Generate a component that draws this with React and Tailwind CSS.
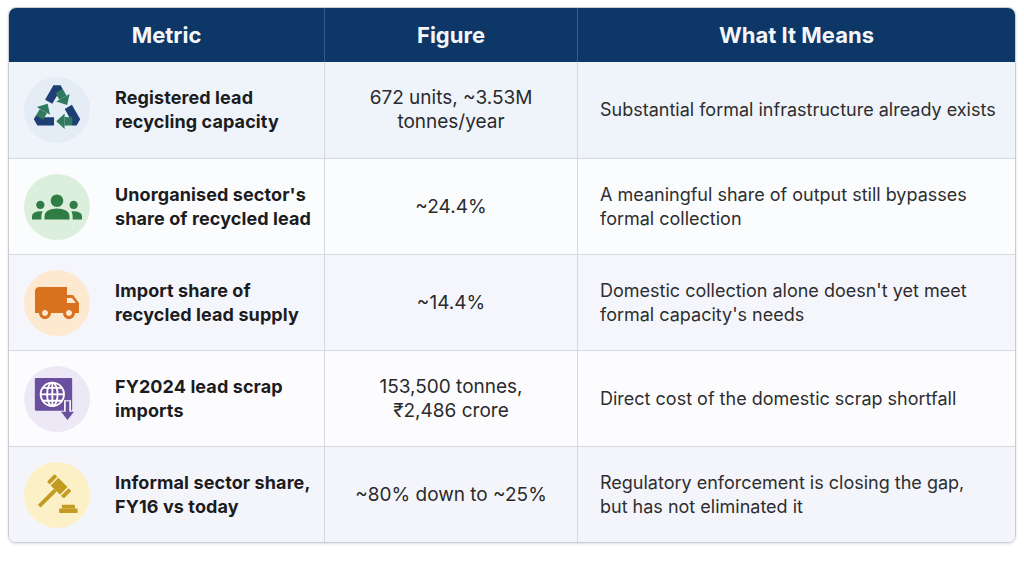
import React from 'react';
import { MdGroups, MdLocalShipping } from 'react-icons/md';

// Two-tone recycle symbol: three bent arrows, each rotated 120deg round the centroid
const RecycleIcon = () => {
  const arm = (
    <g>
      <polyline points="17,21.1 24,9 26,12.46" fill="none" stroke="#1d3f73" strokeWidth="7" strokeLinejoin="bevel" />
      <line x1="25.8" y1="12.1" x2="29" y2="17.7" stroke="#2f7a5e" strokeWidth="7" />
      <polygon points="34.6,14.5 23.4,20.9 32.5,23.8" fill="#2f7a5e" />
    </g>
  );
  return (
    <svg viewBox="3 3 42 42" className="w-[50px] h-[50px]">
      <g transform="translate(0,-4)">
        {arm}
        <g transform="rotate(120 24 28)">{arm}</g>
        <g transform="rotate(240 24 28)">{arm}</g>
      </g>
    </svg>
  );
};

// Globe inside a square with a down arrow at the corner
const GlobeImportIcon = () => (
  <svg viewBox="0 0 48 48" className="w-[56px] h-[56px]">
    <rect x="5" y="6" width="32" height="28" rx="1" fill="#6a4f9e" />
    <g fill="none" stroke="#fff" strokeWidth="1.6">
      <circle cx="20" cy="20" r="10" />
      <ellipse cx="20" cy="20" rx="4.5" ry="10" />
      <line x1="20" y1="10" x2="20" y2="30" />
      <line x1="10" y1="20" x2="30" y2="20" />
      <path d="M11.5 14.5 H28.5 M11.5 25.5 H28.5" />
    </g>
    <path d="M33 25 V37" stroke="#f3f0f8" strokeWidth="6" />
    <path d="M33 26 V37" stroke="#6a4f9e" strokeWidth="3" />
    <polygon points="27.5,35 38.5,35 33,42" fill="#6a4f9e" />
  </svg>
);

// Gavel: head top, handle to the lower left, sound block lower right
const GavelIcon = () => (
  <svg viewBox="0 0 48 48" className="w-[52px] h-[52px]" fill="#c39a22">
    <g transform="rotate(45 26 16)">
      <rect x="15" y="11" width="22" height="10" rx="1" />
      <rect x="18.5" y="10" width="1.4" height="12" fill="#fcf0c6" />
      <rect x="32" y="10" width="1.4" height="12" fill="#fcf0c6" />
      <rect x="24.2" y="21" width="3.6" height="21" rx="1" />
    </g>
    <rect x="28.5" y="33" width="12" height="3.5" rx="0.5" />
    <rect x="26" y="36.5" width="17" height="4" rx="0.5" />
  </svg>
);

const rows = [
  {
    icon: <RecycleIcon />,
    circle: 'bg-[#e4ecf5]',
    bg: 'bg-[#eef4fa]',
    metric: ['Registered lead', 'recycling capacity'],
    figure: ['672 units, ~3.53M', 'tonnes/year'],
    means: ['Substantial formal infrastructure already exists'],
  },
  {
    icon: <MdGroups className="w-[50px] h-[50px] text-[#2f7d45]" />,
    circle: 'bg-[#dcefdc]',
    bg: 'bg-[#fbfcfe]',
    metric: ["Unorganised sector's", 'share of recycled lead'],
    figure: ['~24.4%'],
    means: ['A meaningful share of output still bypasses', 'formal collection'],
  },
  {
    icon: <MdLocalShipping className="w-[48px] h-[48px] text-[#d8721e]" />,
    circle: 'bg-[#fde8d0]',
    bg: 'bg-[#f5f6fb]',
    metric: ['Import share of', 'recycled lead supply'],
    figure: ['~14.4%'],
    means: ["Domestic collection alone doesn't yet meet", "formal capacity's needs"],
  },
  {
    icon: <GlobeImportIcon />,
    circle: 'bg-[#ede8f5]',
    bg: 'bg-[#fcfcfe]',
    metric: ['FY2024 lead scrap', 'imports'],
    figure: ['153,500 tonnes,', '₹2,486 crore'],
    means: ['Direct cost of the domestic scrap shortfall'],
  },
  {
    icon: <GavelIcon />,
    circle: 'bg-[#fcf0c6]',
    bg: 'bg-[#f4f5fb]',
    metric: ['Informal sector share,', 'FY16 vs today'],
    figure: ['~80% down to ~25%'],
    means: ['Regulatory enforcement is closing the gap,', 'but has not eliminated it'],
  },
];

const Lines = ({ lines }) => lines.map((l, i) => <div key={i}>{l}</div>);

export default function App() {
  return (
    <div className="w-[1024px] h-[564px] bg-white pt-[7px] pl-[8px] font-['Inter','Liberation_Sans',sans-serif]">
      <div className="w-[1008px] rounded-lg border border-[#c9cdd3] overflow-hidden shadow-sm">
        {/* Header */}
        <div className="grid grid-cols-[315px_253px_1fr] h-[54px] bg-[#0c3766] text-[#f4f6fa] text-[22px] font-bold">
          <div className="flex items-center justify-center">Metric</div>
          <div className="flex items-center justify-center border-l border-[#3a5a85]">Figure</div>
          <div className="flex items-center justify-center border-l border-[#3a5a85]">What It Means</div>
        </div>

        {rows.map((row, i) => (
          <div
            key={i}
            className={`grid grid-cols-[315px_253px_1fr] h-[96px] leading-[24px] ${row.bg} ${i > 0 ? 'border-t border-[#d5d8dd]' : ''}`}
          >
            <div className="flex items-center pl-[15px]">
              <div className={`w-[66px] h-[66px] rounded-full flex items-center justify-center shrink-0 ${row.circle}`}>
                {row.icon}
              </div>
              <div className="ml-[25px] text-[18px] font-bold text-[#1c1c1e] tracking-[0.1px]">
                <Lines lines={row.metric} />
              </div>
            </div>
            <div className="flex flex-col items-center justify-center text-center text-[19px] text-[#2a2a2c] border-l border-[#d5d8dd]">
              <Lines lines={row.figure} />
            </div>
            <div className="flex flex-col justify-center pl-[22px] text-[18px] text-[#2e2e30] border-l border-[#d5d8dd]">
              <Lines lines={row.means} />
            </div>
          </div>
        ))}
      </div>
    </div>
  );
}
